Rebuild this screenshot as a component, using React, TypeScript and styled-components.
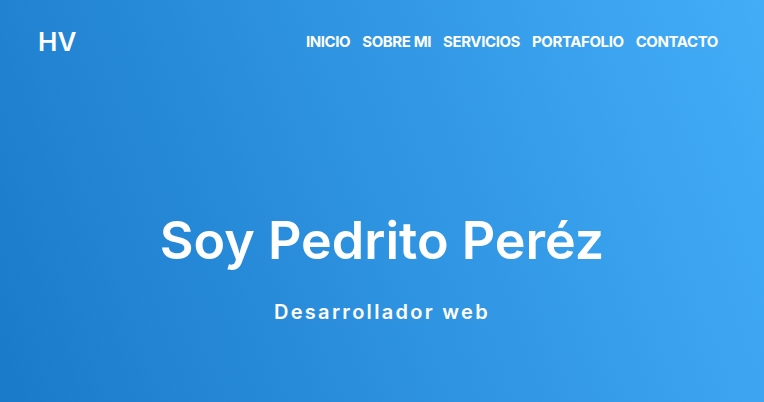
import React from "react";
import styled, { createGlobalStyle } from "styled-components";

const Global = createGlobalStyle`
  html, body { margin: 0; padding: 0; }
  body { font-family: Inter, "Open Sans", sans-serif; }
  * { box-sizing: border-box; }
`;

const Page = styled.div`
  min-height: 100vh;
  height: 402px;
  background: linear-gradient(70deg, #1a7aca, #43adf8);
  color: #fff;
  display: flex;
  flex-direction: column;
  overflow: hidden;
`;

const Header = styled.header`
  height: 82px;
  display: flex;
  align-items: center;
  justify-content: space-between;
  padding: 0 46px 0 38px;
`;

const Logo = styled.div`
  font-size: 26px;
  font-weight: 600;
`;

const Nav = styled.nav`
  display: flex;
  gap: 12px;
`;

const NavLink = styled.a`
  font-size: 15px;
  font-weight: 700;
  letter-spacing: -0.4px;
  color: #fff;
  text-decoration: none;
`;

const Hero = styled.section`
  flex: 1;
  display: flex;
  flex-direction: column;
  align-items: center;
  padding-top: 128px;
`;

const Title = styled.h1`
  margin: 0;
  font-size: 52px;
  font-weight: 600;
  letter-spacing: 0;
  line-height: 1.2;
`;

const Subtitle = styled.p`
  margin: 28px 0 0;
  font-size: 20px;
  font-weight: 600;
  letter-spacing: 2.3px;
`;

const links = ["INICIO", "SOBRE MI", "SERVICIOS", "PORTAFOLIO", "CONTACTO"];

export default function App() {
  return (
    <>
      <Global />
      <Page>
        <Header>
          <Logo>HV</Logo>
          <Nav>
            {links.map((l) => (
              <NavLink key={l} href="#">{l}</NavLink>
            ))}
          </Nav>
        </Header>
        <Hero>
          <Title>Soy Pedrito Peréz</Title>
          <Subtitle>Desarrollador web</Subtitle>
        </Hero>
      </Page>
    </>
  );
}
